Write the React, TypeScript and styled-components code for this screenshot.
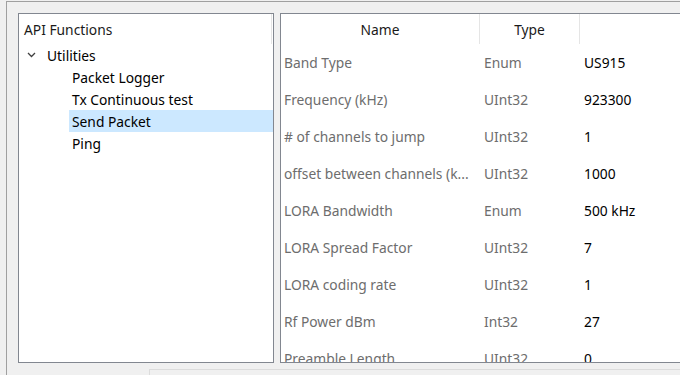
import { Fragment } from "react";
import styled, { createGlobalStyle } from "styled-components";

const GlobalStyle = createGlobalStyle`
    html, body {
        margin: 0;
        padding: 0;
        background: #f0f0f0;
        overflow: hidden;
        font-family: "Noto Sans", "Open Sans", sans-serif;
        font-size: 13.8px;
    }
`;

const Frame = styled("div")`
    margin: 1px 0 0 6px;
    border-top: 1px solid #a0a0a0;
    border-left: 1px solid #a0a0a0;
    padding: 11px 0 0 11px;
    height: 400px;
    overflow: hidden;
`;

const Panels = styled("div")`
    display: flex;
    gap: 6px;
    height: 350px;
`;

const TreePanel = styled("div")`
    width: 256px;
    flex-shrink: 0;
    box-sizing: border-box;
    border: 1px solid #828790;
    background: #ffffff;
    display: flex;
    flex-direction: column;
`;

const TreeHeader = styled("div")`
    height: 30px;
    display: flex;
    align-items: center;
    padding-left: 5px;
    color: #1a1a1a;
    border-right: 1px solid #e5e5e5;
    margin-right: 1px;
`;

const TreeRow = styled("div")<{ $indent: number; $selected?: boolean }>`
    height: 22px;
    display: flex;
    align-items: center;
    margin-left: ${(p) => p.$indent}px;
    background: ${(p) => (p.$selected ? "#cce8ff" : "transparent")};
    color: #000;
`;

const SelectableRow = styled(TreeRow)`
    margin-left: ${(p) => p.$indent - 3}px;
    padding-left: 3px;
`;

const Chevron = styled("svg")`
    width: 9px;
    height: 6px;
    margin: 0 11px 0 8px;
`;

const GridPanel = styled("div")`
    width: 430px;
    flex-shrink: 0;
    box-sizing: border-box;
    border: 1px solid #828790;
    background: #ffffff;
    overflow: hidden;
`;

const Grid = styled("div")`
    display: grid;
    grid-template-columns: 199px 100px 1fr;
`;

const HeadCell = styled("div")<{ $last?: boolean }>`
    height: 30px;
    display: flex;
    align-items: center;
    justify-content: center;
    color: #1a1a1a;
    border-right: ${(p) => (p.$last ? "none" : "1px solid #e5e5e5")};
`;

const Cell = styled("div")<{ $value?: boolean }>`
    height: 37px;
    display: flex;
    align-items: center;
    padding-left: ${(p) => (p.$value ? 4 : 3)}px;
    color: ${(p) => (p.$value ? "#000000" : "#6d6d6d")};
    white-space: nowrap;
    overflow: hidden;
`;

const TypeCell = styled(Cell)`
    padding-left: 4px;
`;

const StatusBox = styled("div")`
    margin: 6px 0 0 131px;
    height: 40px;
    border: 1px solid #dcdcdc;
    border-right: none;
`;

const params = [
    { name: "Band Type", type: "Enum", value: "US915" },
    { name: "Frequency (kHz)", type: "UInt32", value: "923300" },
    { name: "# of channels to jump", type: "UInt32", value: "1" },
    { name: "offset between channels (k...", type: "UInt32", value: "1000" },
    { name: "LORA Bandwidth", type: "Enum", value: "500 kHz" },
    { name: "LORA Spread Factor", type: "UInt32", value: "7" },
    { name: "LORA coding rate", type: "UInt32", value: "1" },
    { name: "Rf Power dBm", type: "Int32", value: "27" },
    { name: "Preamble Length", type: "UInt32", value: "0" },
];

const functions = ["Packet Logger", "Tx Continuous test", "Send Packet", "Ping"];

export default function App() {
    return (
        <>
            <GlobalStyle />
            <Frame>
                <Panels>
                    <TreePanel>
                        <TreeHeader>API Functions</TreeHeader>
                        <TreeRow $indent={0}>
                            <Chevron viewBox="0 0 9 6">
                                <path
                                    d="M1 1 L4.5 4.5 L8 1"
                                    fill="none"
                                    stroke="#404040"
                                    strokeWidth="1.3"
                                />
                            </Chevron>
                            Utilities
                        </TreeRow>
                        {functions.map((f) => (
                            <SelectableRow
                                key={f}
                                $indent={53}
                                $selected={f === "Send Packet"}
                            >
                                {f}
                            </SelectableRow>
                        ))}
                    </TreePanel>
                    <GridPanel>
                        <Grid>
                            <HeadCell>Name</HeadCell>
                            <HeadCell>Type</HeadCell>
                            <HeadCell $last />
                            {params.map((p) => (
                                <Fragment key={p.name}>
                                    <Cell>{p.name}</Cell>
                                    <TypeCell>{p.type}</TypeCell>
                                    <Cell $value>{p.value}</Cell>
                                </Fragment>
                            ))}
                        </Grid>
                    </GridPanel>
                </Panels>
                <StatusBox />
            </Frame>
        </>
    );
}
